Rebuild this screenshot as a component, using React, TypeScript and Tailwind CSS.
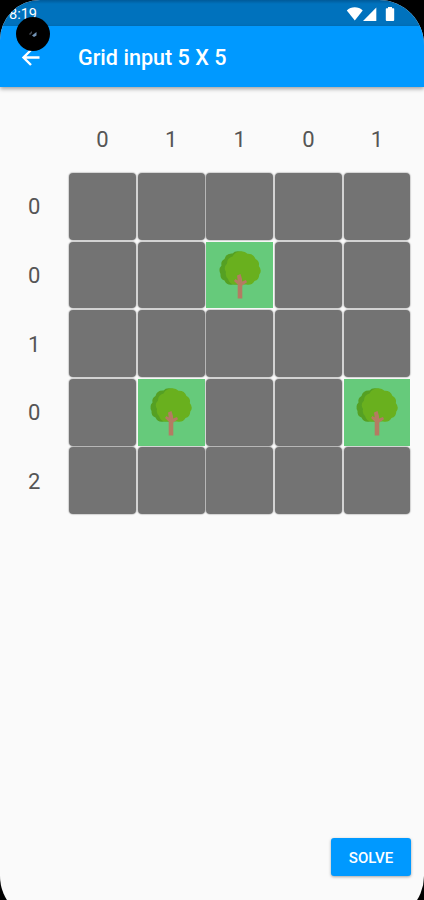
import { useState } from "react"

const colHints = [0, 1, 1, 0, 1]
const rowHints = [0, 0, 1, 0, 2]

function Tree() {
  return (
    <svg viewBox="0 0 44 50" className="h-[50px] w-[44px]">
      <path
        d="M22 1.500Q17 .5 14.500 3.500Q8 3 6.500 9Q2.500 11 3.500 15.500Q0 19 2.500 24Q2 29 6.500 30.500Q9 36 15 34.500H24V2z"
        fill="#55a023"
      />
      <path
        d="M23 1.200Q27 1 29.500 3.800Q35.500 3.500 37.500 9Q42 11.500 40.800 16Q44.500 20.500 41.300 24.500Q41 30 36.500 31Q33.500 36 28 34.500H16Q11.500 34 10 29Q7 26 8 22Q5 17.500 9 13.500Q9 8 14.500 6.500Q17 1.500 23 1.200z"
        fill="#69b01e"
      />
      <path
        d="M19.700 48.500V34.500L16 31l1.500-2 2.200 1.500L19 25.500l3.500-1.500 1.500 5v2.500l4-1.500 1 2.200-4.700 3.300v13z"
        fill="#b47b62"
      />
    </svg>
  )
}

function StatusIcons() {
  return (
    <svg viewBox="0 0 52 16" className="absolute left-[346px] top-[6px] h-4 w-[52px]" fill="#fff">
      <path d="M.8 4.500C5 .2 12.500.2 16.700 4.500L8.800 14.500z" />
      <path d="M30.300 1.500V15H17z" />
      <path d="M40.500 2.200h1.500V1h4v1.200h1.500q.7 0 .7.800v11q0 1-1 1h-6.400q-1 0-1-1V3q0-.8.700-.8z" />
    </svg>
  )
}

export default function App() {
  const [trees, setTrees] = useState(["1-2", "3-1", "3-4"])

  const toggle = (key: string) => {
    setTrees((prev) => (prev.includes(key) ? prev.filter((k) => k !== key) : [...prev, key]))
  }

  return (
    <div className="h-[900px] w-[424px] overflow-hidden bg-black font-[Roboto,sans-serif]">
      <div className="relative flex h-[921px] flex-col overflow-hidden rounded-[45px] rounded-tl-[40px] bg-[#fafafa]">
        <div className="h-[26px] shrink-0 bg-gradient-to-b from-[#005a99] to-[#0072bd] to-15%">
          <span className="absolute left-[9px] top-[7px] text-[14.500px] leading-4 text-white">8:19</span>
          <StatusIcons />
        </div>

        <header className="flex h-[61px] shrink-0 items-center bg-[#0099ff] pl-[21px] text-white shadow-[0_2px_4px_rgba(0,0,0,0.35)]">
          <button aria-label="Back">
            <svg viewBox="0 0 20 20" className="h-5 w-5" fill="none" stroke="#fff" strokeWidth="2.4">
              <path d="M18.500 10.500H3M10 3 2.500 10.500l7.500 7.500" />
            </svg>
          </button>
          <h1 className="ml-[37px] pt-[2px] text-[21.600px] leading-7 font-medium whitespace-nowrap">
            Grid input 5 X 5
          </h1>
        </header>

        {/* camera cutout */}
        <div className="absolute left-4 top-[17px] flex h-[34px] w-[34px] items-center justify-center rounded-full bg-black">
          <svg viewBox="0 0 10 10" className="h-[10px] w-[10px]">
            <path d="M1 5 4 2v2L2 6z" fill="#454a52" />
            <path d="M8.500 3v3.500L6 8 4 6.500z" fill="#7393b5" />
          </svg>
        </div>

        <main className="flex flex-1 flex-col pt-[35px] text-[22px] text-[#555]">
          <div className="flex h-[51px] pl-[69px]">
            {colHints.map((hint, i) => (
              <div key={i} className="flex h-[35px] w-[68.600px] items-center justify-center pr-[1.500px]">
                {hint}
              </div>
            ))}
          </div>

          <div className="flex flex-col gap-[1.800px]">
            {rowHints.map((hint, row) => (
              <div key={row} className="flex h-[66.800px] items-center">
                <span className="w-[69.200px] pt-[1px] pr-[1px] text-center">{hint}</span>
                <div className="flex h-full gap-[1.800px]">
                  {colHints.map((_, col) => {
                    const key = `${row}-${col}`
                    const hasTree = trees.includes(key)
                    return (
                      <button
                        key={key}
                        onClick={() => toggle(key)}
                        className={
                          hasTree
                            ? "flex h-full w-[66.800px] items-center justify-center bg-[#66ca7b]"
                            : "h-full w-[66.800px] rounded-[4px] bg-[#737373] shadow-[0_0_1px_1px_rgba(0,0,0,0.16)]"
                        }
                      >
                        {hasTree && <Tree />}
                      </button>
                    )
                  })}
                </div>
              </div>
            ))}
          </div>

          <button className="mt-auto mr-[13px] mb-[45px] h-[38px] w-[80px] self-end rounded-[3px] bg-[#0099ff] pt-[2px] text-[15px] font-medium text-white shadow-[0_1px_3px_rgba(0,0,0,0.35)]">
            SOLVE
          </button>
        </main>
      </div>
    </div>
  )
}
